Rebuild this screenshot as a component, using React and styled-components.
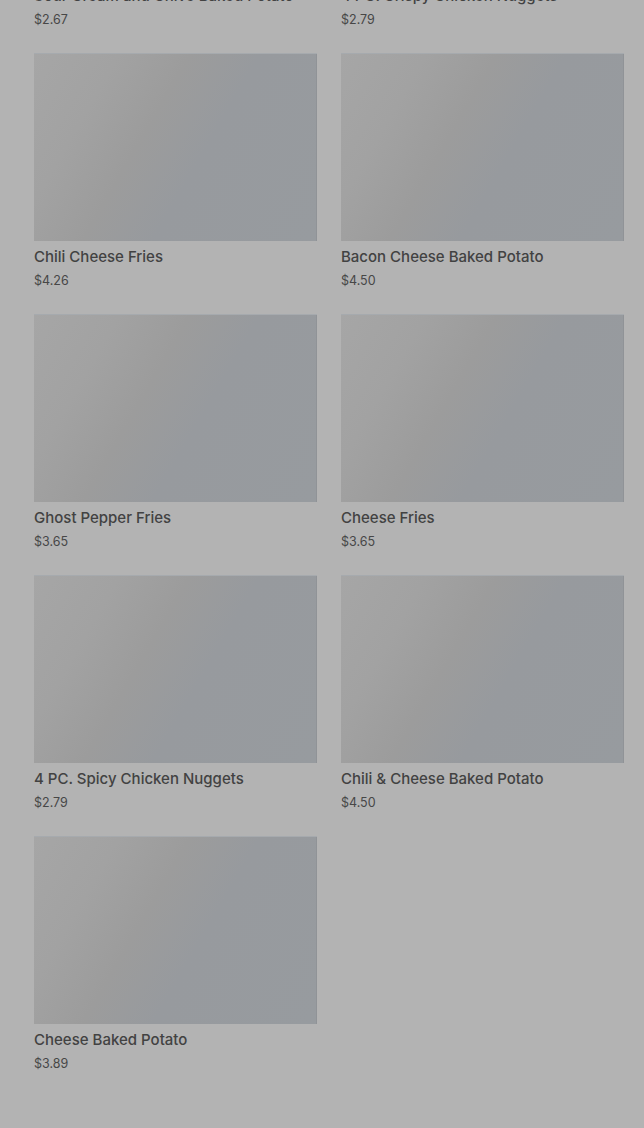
import React from "react";
import styled, { createGlobalStyle } from "styled-components";

const Global = createGlobalStyle`
  html, body { margin: 0; padding: 0; background: #b3b3b3; }
  body { font-family: Inter, "Noto Sans", sans-serif; }
`;

const Viewport = styled.div`
  height: 1128px;
  overflow: hidden;
  background: #b3b3b3;
`;

const Grid = styled.div`
  margin-top: -208px;
  padding: 0 20px 40px 34px;
  display: grid;
  grid-template-columns: 283px 283px;
  column-gap: 24px;
  row-gap: 24px;
`;

const Card = styled.div`
  display: flex;
  flex-direction: column;
`;

const Thumb = styled.div`
  height: 188px;
  background: linear-gradient(
    120deg,
    #a6a6a6 0%,
    #a2a2a2 22%,
    #9c9c9c 40%,
    #979a9e 58%,
    #979b9f 100%
  );
  box-shadow: inset 0 1px 0 #a6aaae, inset -1px 0 0 #909397;
`;

const Title = styled.div`
  margin-top: 6px;
  font-size: 15px;
  line-height: 20px;
  font-weight: 500;
  color: #424242;
  white-space: nowrap;
`;

const Price = styled.div`
  margin-top: 5px;
  font-size: 12.5px;
  line-height: 18px;
  color: #474747;
`;

const items = [
  ["Sour Cream and Chive Baked Potato", "$2.67"],
  ["4 PC. Crispy Chicken Nuggets", "$2.79"],
  ["Chili Cheese Fries", "$4.26"],
  ["Bacon Cheese Baked Potato", "$4.50"],
  ["Ghost Pepper Fries", "$3.65"],
  ["Cheese Fries", "$3.65"],
  ["4 PC. Spicy Chicken Nuggets", "$2.79"],
  ["Chili & Cheese Baked Potato", "$4.50"],
  ["Cheese Baked Potato", "$3.89"],
];

export default function App() {
  return (
    <>
      <Global />
      <Viewport>
        <Grid>
          {items.map(([name, price]) => (
            <Card key={name}>
              <Thumb />
              <Title>{name}</Title>
              <Price>{price}</Price>
            </Card>
          ))}
        </Grid>
      </Viewport>
    </>
  );
}
